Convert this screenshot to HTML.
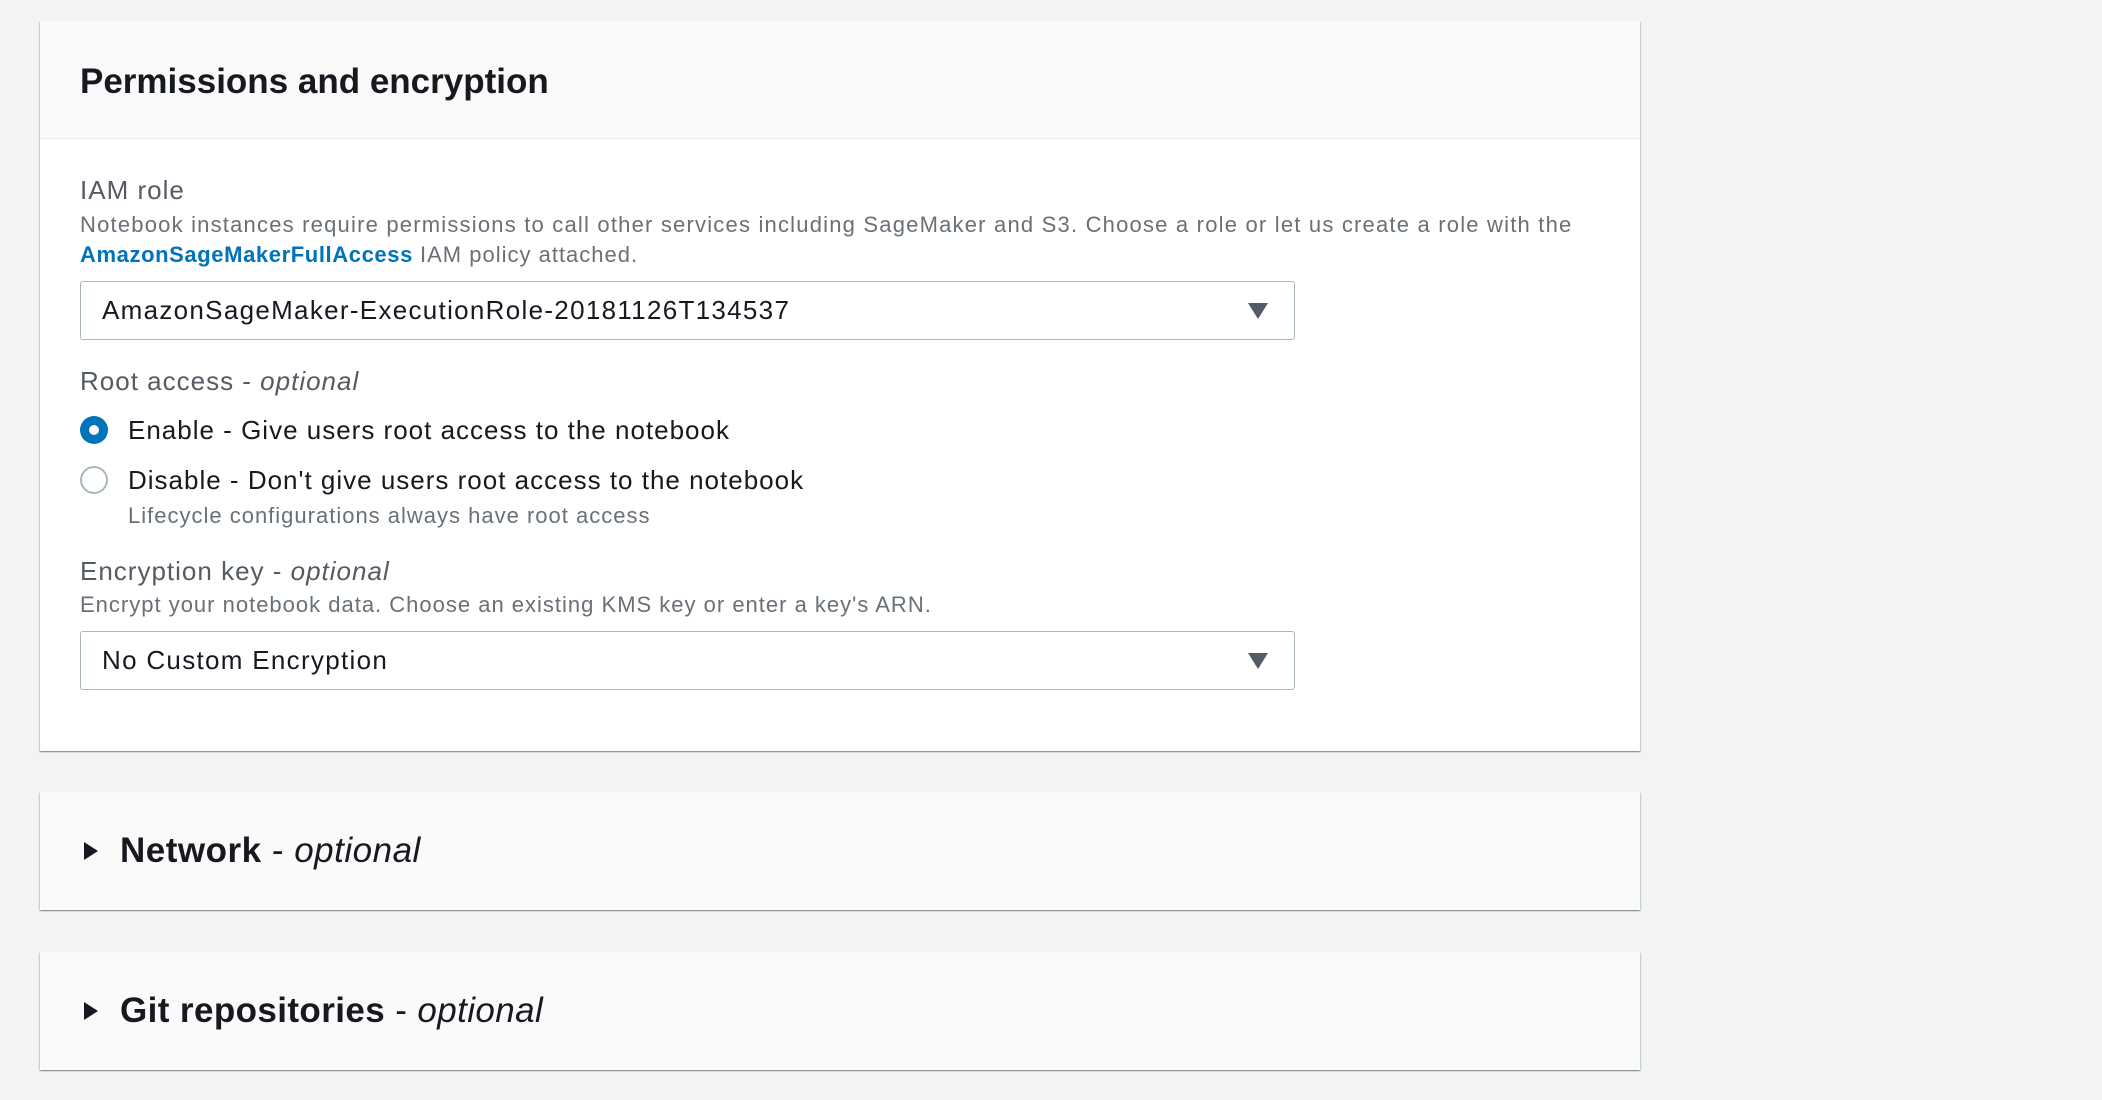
<!DOCTYPE html>
<html><head><meta charset="utf-8"><style>
*{margin:0;padding:0;box-sizing:border-box}
body{width:2102px;height:1100px;background:#f2f3f3;font-family:"Liberation Sans",sans-serif;position:relative;overflow:hidden;color:#16191f}
.p{position:absolute;left:40px;width:1600px;background:#fff;box-shadow:0 1px 1px 0 rgba(0,28,36,.3),1px 1px 1px 0 rgba(0,28,36,.15),-1px 1px 1px 0 rgba(0,28,36,.15)}
.t{position:absolute;white-space:nowrap;letter-spacing:1px}
.sel{position:absolute;left:80px;width:1215px;height:59px;border:1px solid #aab7b8;border-radius:3px;background:#fff}
.sel span{position:absolute;left:21px;top:13px;font-size:26px;color:#16191f;letter-spacing:1.3px;white-space:nowrap}
.sel i{position:absolute;right:26px;top:21px;width:0;height:0;border-left:10px solid transparent;border-right:10px solid transparent;border-top:16px solid #545b64}
.g{color:#687078}
.ar{position:absolute;left:84px;width:0;height:0;border-top:9px solid transparent;border-bottom:9px solid transparent;border-left:14px solid #16191f}
</style></head><body>
<div class="p" style="top:21px;height:730px">
 <div style="height:118px;background:#fafafa;border-bottom:1px solid #eaeded"></div>
</div>
<div class="t" style="left:80px;top:62px;font-size:35px;font-weight:bold;letter-spacing:0">Permissions and encryption</div>
<div class="t" style="left:80px;top:175px;font-size:26px;color:#545b64">IAM role</div>
<div class="t g" style="left:80px;top:212px;font-size:22px;letter-spacing:1.2px">Notebook instances require permissions to call other services including SageMaker and S3. Choose a role or let us create a role with the</div>
<div class="t g" style="left:80px;top:242px;font-size:22px"><b style="color:#0073bb;letter-spacing:0.6px">AmazonSageMakerFullAccess</b> IAM policy attached.</div>
<div class="sel" style="top:281px"><span>AmazonSageMaker-ExecutionRole-20181126T134537</span><i></i></div>
<div class="t" style="left:80px;top:366px;font-size:26px;color:#545b64">Root access - <i>optional</i></div>
<div style="position:absolute;left:80px;top:416px;width:28px;height:28px;border-radius:50%;background:#0073bb"><div style="position:absolute;left:9px;top:9px;width:10px;height:10px;border-radius:50%;background:#fff"></div></div>
<div class="t" style="left:128px;top:415px;font-size:26px">Enable - Give users root access to the notebook</div>
<div style="position:absolute;left:80px;top:466px;width:28px;height:28px;border-radius:50%;border:2px solid #aab7b8;background:#fff"></div>
<div class="t" style="left:128px;top:465px;font-size:26px">Disable - Don't give users root access to the notebook</div>
<div class="t g" style="left:128px;top:503px;font-size:22px">Lifecycle configurations always have root access</div>
<div class="t" style="left:80px;top:556px;font-size:26px;color:#545b64">Encryption key - <i>optional</i></div>
<div class="t g" style="left:80px;top:592px;font-size:22px">Encrypt your notebook data. Choose an existing KMS key or enter a key's ARN.</div>
<div class="sel" style="top:631px"><span>No Custom Encryption</span><i></i></div>

<div class="p" style="top:792px;height:118px;background:#fafafa"></div>
<div class="ar" style="top:842px"></div>
<div class="t" style="left:120px;top:831px;font-size:35px;letter-spacing:0.5px"><b>Network</b> - <i>optional</i></div>

<div class="p" style="top:952px;height:118px;background:#fafafa"></div>
<div class="ar" style="top:1002px"></div>
<div class="t" style="left:120px;top:991px;font-size:35px;letter-spacing:0.4px"><b>Git repositories</b> - <i>optional</i></div>
</body></html>
